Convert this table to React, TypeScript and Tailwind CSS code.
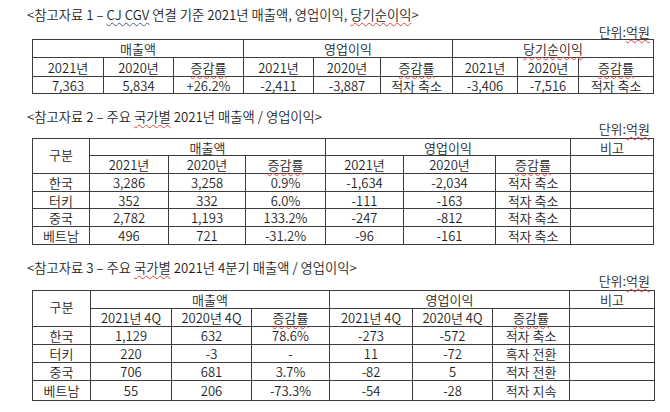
import React from 'react'

const font = { fontFamily: '"Malgun Gothic", "Noto Sans CJK KR", "Noto Sans", sans-serif' }

// spell-check style squiggle used on a few words in the reference
const Sq = ({ children, blue }: { children: React.ReactNode; blue?: boolean }) => (
  <span
    className={`underline decoration-wavy decoration-1 underline-offset-[2px] ${
      blue ? 'decoration-[#4b5b8c]' : 'decoration-[#e0443a]'
    }`}
  >
    {children}
  </span>
)

const td = 'border border-[#3c3c3c] p-0 text-center align-middle whitespace-nowrap'

interface SectionProps {
  title: React.ReactNode
  mt: string
  unitClass: string
  children: React.ReactNode
}

const Section: React.FC<SectionProps> = ({ title, mt, unitClass, children }) => (
  <div className={mt}>
    <div className="flex h-[18px] items-center pl-[27px] text-[13.3px] leading-[18px]">{title}</div>
    <div className={`flex justify-end pr-[20px] text-[13px] ${unitClass}`}>
      <span>
        단위:<Sq>억원</Sq>
      </span>
    </div>
    {children}
  </div>
)

const Rate = () => <Sq>증감률</Sq>

const Table1 = () => {
  const widths = [71, 70, 70, 70, 67, 72, 65, 61, 75]
  const data = ['7,363', '5,834', '+26.2%', '-2,411', '-3,887', '적자 축소', '-3,406', '-7,516', '적자 축소']
  return (
    <table className="ml-[32px] w-[621px] table-fixed border-collapse text-[13px] leading-none">
      <colgroup>
        {widths.map((w, i) => (
          <col key={i} style={{ width: w }} />
        ))}
      </colgroup>
      <tbody>
        <tr className="h-[18px]">
          <td colSpan={3} className={td}>매출액</td>
          <td colSpan={3} className={td}>영업이익</td>
          <td colSpan={3} className={td}>
            <Sq>당기순이익</Sq>
          </td>
        </tr>
        <tr className="h-[19px]">
          {[0, 1, 2].map((g) => (
            <React.Fragment key={g}>
              <td className={td}>2021년</td>
              <td className={td}>2020년</td>
              <td className={td}>
                <Rate />
              </td>
            </React.Fragment>
          ))}
        </tr>
        <tr className="h-[17px]">
          {data.map((d, i) => (
            <td key={i} className={td}>
              {d}
            </td>
          ))}
        </tr>
      </tbody>
    </table>
  )
}

interface CountryTableProps {
  widths: number[]
  heights: string[]
  y1: string
  y2: string
  rows: string[][]
  width: string
}

const CountryTable: React.FC<CountryTableProps> = ({ widths, heights, y1, y2, rows, width }) => (
  <table className={`ml-[32px] ${width} table-fixed border-collapse text-[13px] leading-none`}>
    <colgroup>
      {widths.map((w, i) => (
        <col key={i} style={{ width: w }} />
      ))}
    </colgroup>
    <tbody>
      <tr className={heights[0]}>
        <td rowSpan={2} className={td}>
          <div className="-mt-[4px]">구분</div>
        </td>
        <td colSpan={3} className={td}>매출액</td>
        <td colSpan={3} className={td}>영업이익</td>
        <td className={td}>비고</td>
      </tr>
      <tr className={heights[1]}>
        {[0, 1].map((g) => (
          <React.Fragment key={g}>
            <td className={td}>{y1}</td>
            <td className={td}>{y2}</td>
            <td className={td}>
              <Rate />
            </td>
          </React.Fragment>
        ))}
        <td className={td}></td>
      </tr>
      {rows.map((r, i) => (
        <tr key={i} className={heights[i + 2]}>
          {r.map((c, j) => (
            <td key={j} className={td}>
              {c}
            </td>
          ))}
          <td className={td}></td>
        </tr>
      ))}
    </tbody>
  </table>
)

export default function App() {
  return (
    <div
      className="h-[412px] w-[670px] overflow-hidden bg-white pt-[6px] font-[350] text-[#1e1e1e]"
      style={font}
    >
      <Section
        mt=""
        unitClass="h-[15px] leading-[15px]"
        title={
          <span>
            &lt;참고자료 1 – <Sq blue>CJ CGV</Sq> 연결 기준 2021년 매출액, 영업이익, <Sq>당기순이익</Sq>&gt;
          </span>
        }
      >
        <Table1 />
      </Section>

      <Section
        mt="mt-[14px]"
        unitClass="-mt-[4px] h-[16px] leading-[14px]"
        title={
          <span>
            &lt;참고자료 2 – 주요 <Sq>국가별</Sq> 2021년 매출액 / 영업이익&gt;
          </span>
        }
      >
        <CountryTable
          width="w-[621px]"
          widths={[57, 79, 77, 80, 78, 92, 75, 83]}
          heights={['h-[17px]', 'h-[18px]', 'h-[18px]', 'h-[17px]', 'h-[18px]', 'h-[18px]']}
          y1="2021년"
          y2="2020년"
          rows={[
            ['한국', '3,286', '3,258', '0.9%', '-1,634', '-2,034', '적자 축소'],
            ['터키', '352', '332', '6.0%', '-111', '-163', '적자 축소'],
            ['중국', '2,782', '1,193', '133.2%', '-247', '-812', '적자 축소'],
            ['베트남', '496', '721', '-31.2%', '-96', '-161', '적자 축소'],
          ]}
        />
      </Section>

      <Section
        mt="mt-[14px]"
        unitClass="-mt-[3px] h-[16px] leading-[14px]"
        title={
          <span>
            &lt;참고자료 3 – 주요 <Sq>국가별</Sq> 2021년 4분기 매출액 / 영업이익&gt;
          </span>
        }
      >
        <CountryTable
          width="w-[622px]"
          widths={[58, 81, 80, 78, 83, 80, 77, 85]}
          heights={['h-[18px]', 'h-[18px]', 'h-[18px]', 'h-[18px]', 'h-[18px]', 'h-[20px]']}
          y1="2021년 4Q"
          y2="2020년 4Q"
          rows={[
            ['한국', '1,129', '632', '78.6%', '-273', '-572', '적자 축소'],
            ['터키', '220', '-3', '-', '11', '-72', '흑자 전환'],
            ['중국', '706', '681', '3.7%', '-82', '5', '적자 전환'],
            ['베트남', '55', '206', '-73.3%', '-54', '-28', '적자 지속'],
          ]}
        />
      </Section>
    </div>
  )
}
